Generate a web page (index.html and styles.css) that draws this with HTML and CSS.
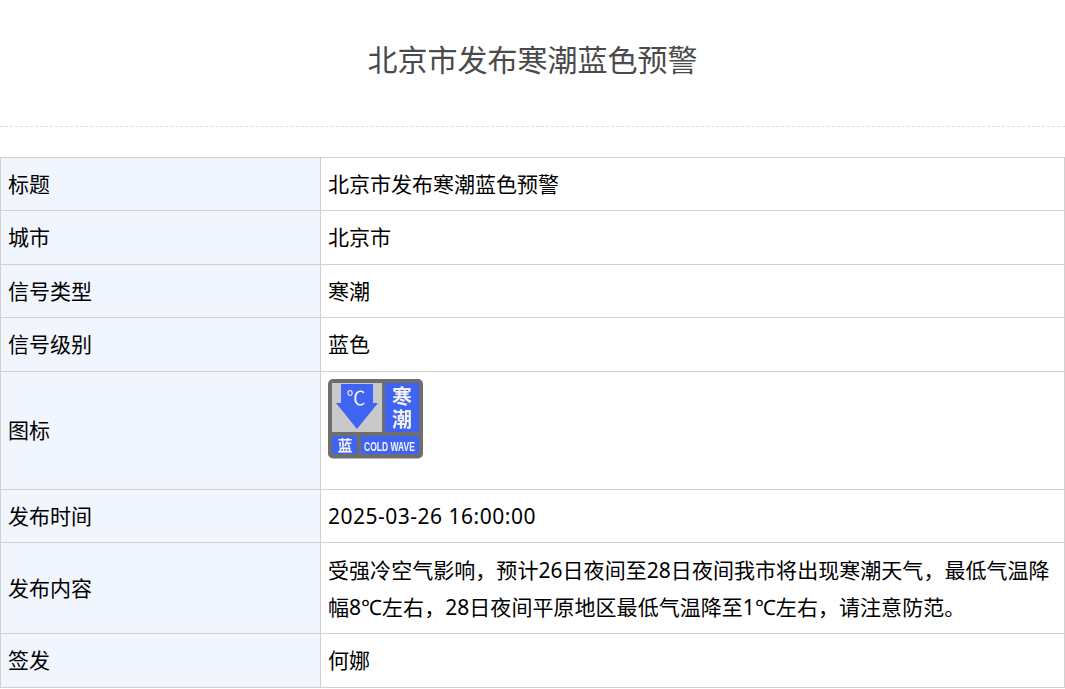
FILE: index.html
```
<!DOCTYPE html>
<html lang="zh">
<head>
<meta charset="utf-8">
<title>北京市发布寒潮蓝色预警</title>
<link rel="stylesheet" href="styles.css">
</head>
<body>
<h1 class="title">北京市发布寒潮蓝色预警</h1>
<table class="info">
<colgroup><col class="c1"><col class="c2"></colgroup>
<tbody>
<tr><th>标题</th><td>北京市发布寒潮蓝色预警</td></tr>
<tr><th>城市</th><td>北京市</td></tr>
<tr><th>信号类型</th><td>寒潮</td></tr>
<tr><th>信号级别</th><td>蓝色</td></tr>
<tr><th>图标</th><td class="icon-cell">
<svg class="icon" width="95" height="80" viewBox="0 0 95 80">
<defs><filter id="soft" x="-5%" y="-5%" width="110%" height="110%"><feGaussianBlur stdDeviation="0.6"/></filter></defs>
<rect width="95" height="79.5" rx="5" fill="#6e6e6e"/>
<rect x="4" y="4" width="50" height="49" fill="#c9c9c9"/>
<rect x="57" y="4" width="34" height="49" fill="#3f63f2"/>
<rect x="4" y="57" width="25" height="18" fill="#3f63f2"/>
<rect x="33" y="57" width="58" height="18" fill="#3f63f2"/>
<path d="M13 5H45V24H50L29 50L8 24H13Z" fill="#3f63f2"/>
<g filter="url(#soft)" fill="#f2f2f2" text-anchor="middle">
<text x="28" y="26" class="deg">℃</text>
<text x="74" y="25" class="cn">寒</text>
<text x="74" y="48" class="cn">潮</text>
<text x="17" y="72" class="cn-s">蓝</text>
<text x="61.5" y="72" class="en" textLength="51" lengthAdjust="spacingAndGlyphs">COLD WAVE</text>
</g>
</svg>
</td></tr>
<tr><th>发布时间</th><td class="time">2025-03-26 16:00:00</td></tr>
<tr><th>发布内容</th><td class="body-text">受强冷空气影响，预计26日夜间至28日夜间我市将出现寒潮天气，最低气温降幅8℃左右，28日夜间平原地区最低气温降至1℃左右，请注意防范。</td></tr>
<tr><th>签发</th><td>何娜</td></tr>
</tbody>
</table>
</body>
</html>
```
FILE: styles.css
```
html, body {
  margin: 0;
  padding: 0;
  background: #fff;
}
body {
  font-family: "Noto Sans", "Noto Sans CJK SC", sans-serif;
  overflow: hidden;
}
.title {
  margin: 0 0 29.5px;
  height: 126px;
  line-height: 120px;
  text-align: center;
  font-size: 30px;
  font-weight: 400;
  color: #4a4a4a;
  border-bottom: 1px dashed #dddddd;
}
.info {
  width: 1065px;
  table-layout: fixed;
  border-collapse: collapse;
  font-size: 21px;
  line-height: 36.5px;
  color: #000;
}
.c1 { width: 320px; }
.info th, .info td {
  border: 1px solid #d0d0d0;
  padding: 8px 8px 8px 7px;
  text-align: left;
  font-weight: 400;
  vertical-align: middle;
}
.info th { background: #f1f5fd; }
.info .time { letter-spacing: 0.5px; }
.info .body-text {
  line-height: 37px;
  letter-spacing: 0.045px;
  padding-top: 9px;
  padding-bottom: 7px;
}
.icon-cell { height: 101px; vertical-align: top !important; }
.icon { display: block; margin-top: -1px; }
.deg { font: 400 19px "Noto Sans CJK SC", sans-serif; }
.cn { font: 700 20px "Noto Sans CJK SC", sans-serif; }
.cn-s { font: 700 15px "Noto Sans CJK SC", sans-serif; }
.en { font: 700 13px "Liberation Sans", sans-serif; }
```
